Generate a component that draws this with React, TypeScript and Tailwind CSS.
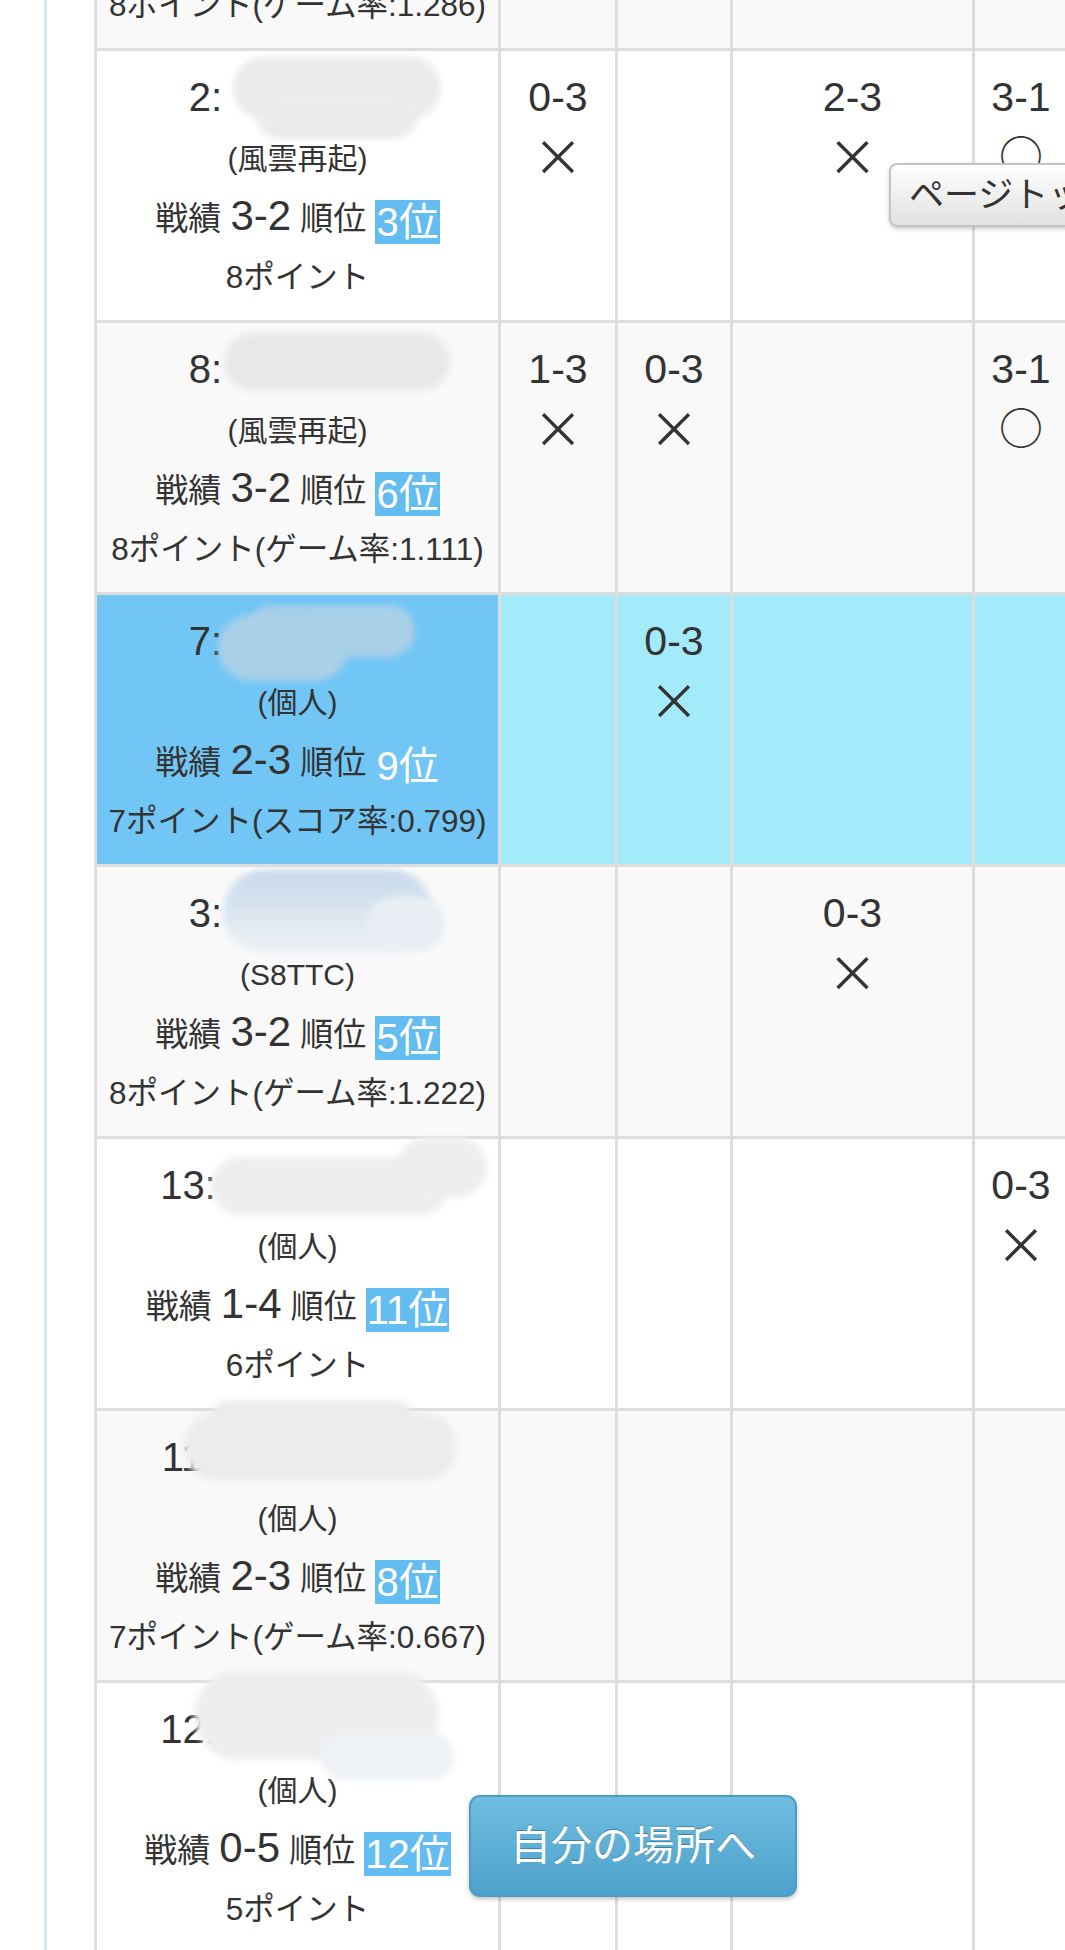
import React from 'react';

type Result = { score: string; mark: 'x' | 'o' } | null;

interface Player {
  no: string;
  spacer: string;
  team: string;
  record: string;
  rank: string;
  points: string;
  tone: 'white' | 'gray' | 'me';
  blobs: string[];
  results: Result[];
}

const colWidths = ['w-[117px]', 'w-[115px]', 'w-[242px]', 'w-[95px]', 'w-[200px]'];

const players: Player[] = [
  {
    no: '5:', spacer: 'w-[184px]', team: '(個人)', record: '3-2', rank: '4位',
    points: '8ポイント(ゲーム率:1.286)', tone: 'gray', blobs: [],
    results: [null, null, null, null, null],
  },
  {
    no: '2:', spacer: 'w-[184px]', team: '(風雲再起)', record: '3-2', rank: '3位',
    points: '8ポイント', tone: 'white',
    blobs: [
      'left-[136px] top-[6px] w-[208px] h-[62px] rounded-[30px] bg-[#ebebeb]',
      'left-[160px] top-[44px] w-[160px] h-[44px] rounded-full bg-[#ebebeb]',
    ],
    results: [{ score: '0-3', mark: 'x' }, null, { score: '2-3', mark: 'x' }, { score: '3-1', mark: 'o' }, null],
  },
  {
    no: '8:', spacer: 'w-[184px]', team: '(風雲再起)', record: '3-2', rank: '6位',
    points: '8ポイント(ゲーム率:1.111)', tone: 'gray',
    blobs: ['left-[127px] top-[10px] w-[226px] h-[58px] rounded-full bg-[#e8e8e8]'],
    results: [{ score: '1-3', mark: 'x' }, { score: '0-3', mark: 'x' }, null, { score: '3-1', mark: 'o' }, null],
  },
  {
    no: '7:', spacer: 'w-[184px]', team: '(個人)', record: '2-3', rank: '9位',
    points: '7ポイント(スコア率:0.799)', tone: 'me',
    blobs: [
      'left-[150px] top-[10px] w-[168px] h-[52px] rounded-full bg-[#a9cfe9]',
      'left-[121px] top-[20px] w-[130px] h-[66px] rounded-full bg-[#a9cfe9]',
    ],
    results: [null, { score: '0-3', mark: 'x' }, null, null, null],
  },
  {
    no: '3:', spacer: 'w-[184px]', team: '(S8TTC)', record: '3-2', rank: '5位',
    points: '8ポイント(ゲーム率:1.222)', tone: 'gray',
    blobs: [
      'left-[126px] top-[3px] w-[210px] h-[84px] rounded-full bg-gradient-to-b from-[#c7daeb] to-[#eef2f6]',
      'left-[270px] top-[30px] w-[78px] h-[54px] rounded-full bg-[#e8eef4]',
    ],
    results: [null, null, { score: '0-3', mark: 'x' }, null, null],
  },
  {
    no: '13:', spacer: 'w-[219px]', team: '(個人)', record: '1-4', rank: '11位',
    points: '6ポイント', tone: 'white',
    blobs: [
      'left-[114px] top-[18px] w-[238px] h-[58px] rounded-full bg-[#eeeeee]',
      'left-[300px] top-[-2px] w-[90px] h-[60px] rounded-full bg-[#eeeeee]',
    ],
    results: [null, null, null, { score: '0-3', mark: 'x' }, null],
  },
  {
    no: '11:', spacer: 'w-[219px]', team: '(個人)', record: '2-3', rank: '8位',
    points: '7ポイント(ゲーム率:0.667)', tone: 'gray',
    blobs: [
      'left-[86px] top-[2px] w-[274px] h-[68px] rounded-full bg-[#ececec]',
      'left-[115px] top-[-11px] w-[200px] h-[32px] rounded-full bg-[#ececec]',
    ],
    results: [null, null, null, null, null],
  },
  {
    no: '12:', spacer: 'w-[219px]', team: '(個人)', record: '0-5', rank: '12位',
    points: '5ポイント', tone: 'white',
    blobs: [
      'left-[97px] top-[-13px] w-[245px] h-[90px] rounded-full bg-[#eeeeee]',
      'left-[224px] top-[50px] w-[133px] h-[47px] rounded-full bg-[#eef1f5]',
    ],
    results: [null, null, null, null, null],
  },
];

const Mark: React.FC<{ mark: 'x' | 'o' }> = ({ mark }) =>
  mark === 'x' ? (
    <span className="font-['Noto_Sans_CJK_JP',sans-serif] text-[50px] leading-none">×</span>
  ) : (
    <span className="font-['Noto_Sans_CJK_JP',sans-serif] text-[44px] leading-none">○</span>
  );

const PlayerRow: React.FC<{ p: Player }> = ({ p }) => {
  const rowBg = p.tone === 'gray' ? 'bg-[#f9f9f9]' : p.tone === 'me' ? 'bg-[#a3eafa]' : 'bg-white';
  const nameBg = p.tone === 'me' ? 'bg-[#72c6f6]' : '';
  const rankBg = p.tone === 'me' ? '' : 'bg-[#64bdf0]';

  return (
    <div className={`flex border-b-[3px] border-[#dddddd] ${rowBg}`}>
      <div className={`relative flex h-[269px] w-[404px] shrink-0 flex-col border-r-[3px] border-[#dddddd] pt-[16px] text-center ${nameBg}`}>
        <div className="h-[60px] whitespace-nowrap text-[40px] leading-[60px]">
          <span>{p.no}</span>
          <span className={`inline-block ${p.spacer}`} />
        </div>
        <div className="h-[60px] text-[30px] leading-[64px]">{p.team}</div>
        <div className="h-[58px] whitespace-nowrap text-[33px] leading-[58px]">
          戦績 <span className="text-[42px]">{p.record}</span> 順位{' '}
          <span className={`inline-block h-[44px] px-[1px] align-[-6px] text-[40px] leading-[44px] text-white ${rankBg}`}>{p.rank}</span>
        </div>
        <div className="h-[64px] whitespace-nowrap text-[31.5px] leading-[64px]">{p.points}</div>
        {p.blobs.map((b) => (
          <div key={b} className={`absolute blur-[3px] ${b}`} />
        ))}
      </div>
      {p.results.map((r, i) => (
        <div key={i} className={`h-[269px] shrink-0 border-r-[3px] border-[#dddddd] pt-[16px] text-center ${colWidths[i]}`}>
          {r && (
            <>
              <div className="h-[60px] text-[41px] leading-[60px]">{r.score}</div>
              <div className="flex h-[54px] items-center justify-center">
                <Mark mark={r.mark} />
              </div>
            </>
          )}
        </div>
      ))}
    </div>
  );
};

export default function App() {
  return (
    <div className="relative h-[1950px] w-[1065px] overflow-hidden bg-white font-['Liberation_Sans','Noto_Sans_CJK_JP',sans-serif] text-[#333333]">
      <div className="ml-[44px] flex h-full flex-col border-l-[3px] border-[#cde9f1] pl-[47px]">
        <div className="mt-[-221px] w-[1200px] shrink-0 border-l-[3px] border-[#dddddd]">
          {players.map((p) => (
            <PlayerRow key={p.no} p={p} />
          ))}
        </div>
      </div>

      <button className="absolute left-[889px] top-[163px] h-[64px] w-[300px] whitespace-nowrap rounded-[8px] border-2 border-[#c4c4c4] bg-gradient-to-b from-[#fefefe] to-[#e2e2e2] pl-[18px] text-left text-[35px] leading-[58px] text-[#333333] shadow-[0_2px_4px_rgba(0,0,0,0.2)]">
        ページトップへ
      </button>

      <button className="absolute left-[469px] top-[1795px] h-[102px] w-[328px] whitespace-nowrap rounded-[11px] border-2 border-[#4c9cc4] bg-gradient-to-b from-[#6fbde1] to-[#4da1ca] text-center text-[41px] leading-[96px] text-white shadow-[0_2px_4px_rgba(0,0,0,0.25)] [text-shadow:0_-1px_0_rgba(0,0,0,0.3)]">
        自分の場所へ
      </button>
    </div>
  );
}
